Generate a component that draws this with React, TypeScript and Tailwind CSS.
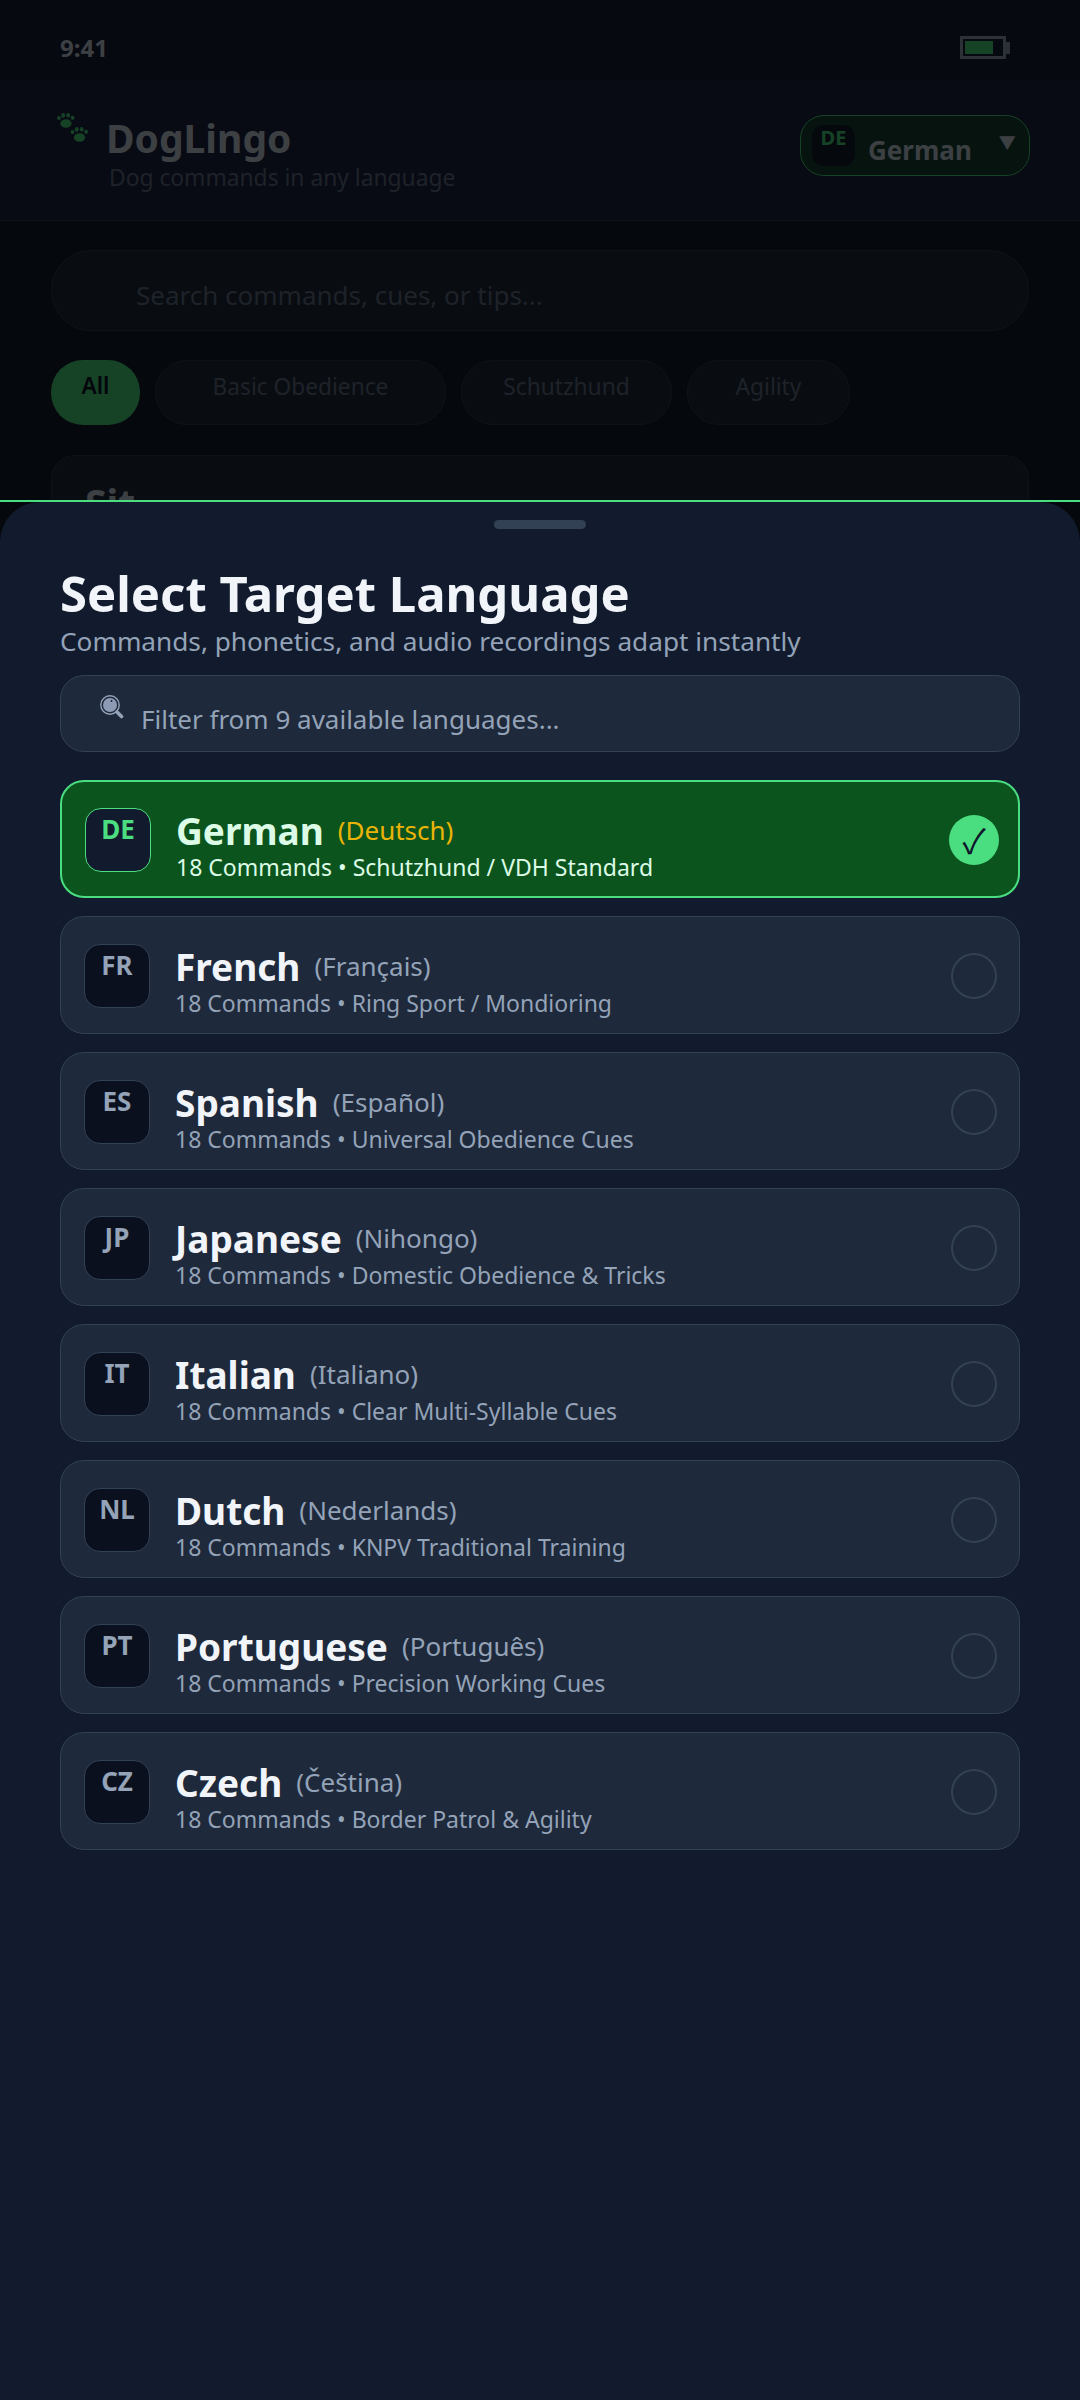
import React from 'react';

interface Language {
  code: string;
  name: string;
  native: string;
  detail: string;
}

const languages: Language[] = [
  { code: 'DE', name: 'German', native: '(Deutsch)', detail: '18 Commands • Schutzhund / VDH Standard' },
  { code: 'FR', name: 'French', native: '(Français)', detail: '18 Commands • Ring Sport / Mondioring' },
  { code: 'ES', name: 'Spanish', native: '(Español)', detail: '18 Commands • Universal Obedience Cues' },
  { code: 'JP', name: 'Japanese', native: '(Nihongo)', detail: '18 Commands • Domestic Obedience & Tricks' },
  { code: 'IT', name: 'Italian', native: '(Italiano)', detail: '18 Commands • Clear Multi-Syllable Cues' },
  { code: 'NL', name: 'Dutch', native: '(Nederlands)', detail: '18 Commands • KNPV Traditional Training' },
  { code: 'PT', name: 'Portuguese', native: '(Português)', detail: '18 Commands • Precision Working Cues' },
  { code: 'CZ', name: 'Czech', native: '(Čeština)', detail: '18 Commands • Border Patrol & Agility' },
];

function Paw({ x, y }: { x: number; y: number }) {
  return (
    <g transform={`translate(${x} ${y})`}>
      <ellipse cx="9" cy="10.5" rx="5.6" ry="4.3" />
      <ellipse cx="2" cy="5" rx="1.9" ry="2.1" />
      <ellipse cx="6.2" cy="2.4" rx="1.9" ry="2.3" />
      <ellipse cx="11.2" cy="2.2" rx="1.9" ry="2.2" />
      <ellipse cx="15.6" cy="4.8" rx="1.9" ry="2.1" />
    </g>
  );
}

function Chip({ label, width }: { label: string; width: string }) {
  return (
    <div
      className={`flex h-[65px] justify-center rounded-[32px] border border-[#334155] bg-[#1e293b] pt-[10px] text-[22.7px] leading-[32px] text-[#64748b] ${width}`}
    >
      {label}
    </div>
  );
}

function LanguageRow({ lang, selected }: { lang: Language; selected: boolean }) {
  return (
    <div
      className={`flex h-[118px] items-center rounded-[24px] pl-[23px] pr-[22px] ${
        selected ? 'border-2 border-[#4ade80] bg-[#0c541d]' : 'border border-[#334155] bg-[#1e293b]'
      }`}
    >
      <div
        className={`mt-[2px] flex h-[64px] w-[66px] shrink-0 justify-center rounded-[16px] border text-[26px] font-bold leading-[40px] ${
          selected ? 'border-[#4ade80] bg-[#121b2d] text-[#4ade80]' : 'border-[#334155] bg-[#0a101d] text-[#94a3b8]'
        }`}
      >
        {lang.code}
      </div>
      <div className="ml-[25px] flex-1 pt-[10px]">
        <div className="flex items-baseline gap-[14px]">
          <span
            className={`translate-y-[2px] text-[37px] font-bold leading-[46px] ${
              selected ? 'text-[#dcfce7]' : 'text-[#f1f5f9]'
            }`}
          >
            {lang.name}
          </span>
          <span className={`-translate-y-[3px] text-[26px] leading-[36px] ${selected ? 'text-[#eab308]' : 'text-[#94a3b8]'}`}>
            {lang.native}
          </span>
        </div>
        <div className={`text-[23px] leading-[30px] ${selected ? 'text-[#dcfce7]' : 'text-[#94a3b8]'}`}>
          {lang.detail}
        </div>
      </div>
      {selected ? (
        <div className="-ml-[1px] -mr-[3px] mt-[2px] flex h-[50px] w-[50px] items-center justify-center rounded-full bg-[#4ade80] font-['Noto_Sans_CJK_SC',sans-serif] text-[34px] leading-none text-[#0f172a]">
          ✓
        </div>
      ) : (
        <div className="mt-[2px] h-[46px] w-[46px] rounded-full border-2 border-[#334155]" />
      )}
    </div>
  );
}

export default function App() {
  return (
    <div className="relative h-[2400px] w-[1080px] overflow-hidden bg-[#121b2d] font-['Noto_Sans',sans-serif]">
      {/* Page behind the sheet */}
      <div className="flex h-[80px] items-start justify-between bg-[#141e36] pl-[60px] pr-[70px] pt-[30px]">
        <span className="text-[24px] font-bold leading-[36px] text-[#cbd5e1]">9:41</span>
        <div className="mt-[6px] flex items-center">
          <div className="h-[23px] w-[46px] border-[3px] border-[#94a3b8] p-[2px]">
            <div className="h-full w-[28px] bg-[#4ade80]" />
          </div>
          <div className="h-[12px] w-[4px] bg-[#94a3b8]" />
        </div>
      </div>
      <div className="flex h-[141px] items-start justify-between border-b border-[#334155] bg-[#1b2540] pl-[57px] pr-[50px] pt-[33px]">
        <div className="flex">
          <svg width="32" height="29" viewBox="0 0 32 29" fill="#4ade80" className="shrink-0">
            <Paw x={0} y={0} />
            <Paw x={13.5} y={14} />
          </svg>
          <div className="ml-[17px]">
            <div className="text-[39px] font-bold leading-[50px] text-[#cbd5e1]">DogLingo</div>
            <div className="ml-[3px] text-[22.8px] leading-[30px] text-[#64748b]">Dog commands in any language</div>
          </div>
        </div>
        <div className="mt-[2px] flex h-[61px] w-[230px] items-start rounded-[24px] border border-[#4ade80] bg-[#14532d]/60 pl-[11px] pt-[9px]">
          <div className="flex h-[41px] w-[43px] justify-center rounded-[12px] bg-[#111b2e] text-[20px] font-bold leading-[26px] text-[#4ade80]">
            DE
          </div>
          <span className="ml-[13px] mt-[5px] text-[26px] font-bold leading-[40px] text-[#cbd5e1]">German</span>
          <span className="ml-[27px] mt-[2px] font-['Noto_Sans_CJK_SC',sans-serif] text-[17px] leading-[30px] text-[#cbd5e1]">▼</span>
        </div>
      </div>
      <div className="px-[51px] pt-[29px]">
        <div className="flex h-[81px] items-center rounded-[40px] border border-[#334155] bg-[#1e293b] pl-[84px] pt-[10px] text-[26px] text-[#64748b]">
          Search commands, cues, or tips...
        </div>
        <div className="mt-[29px] flex gap-[15px]">
          <div className="flex h-[65px] w-[89px] justify-center rounded-[32px] bg-[#4ade80] pt-[10px] text-[22.7px] font-semibold leading-[32px] text-[#0f172a]">
            All
          </div>
          <Chip label="Basic Obedience" width="w-[291px]" />
          <Chip label="Schutzhund" width="w-[211px]" />
          <Chip label="Agility" width="w-[163px]" />
        </div>
        <div className="mt-[30px] h-[200px] rounded-[24px] border border-[#334155] bg-[#1e293b] pl-[33px] pt-[22px] text-[39px] font-bold leading-[50px] text-[#cbd5e1]">
          Sit
        </div>
      </div>

      {/* Dim overlay */}
      <div className="absolute inset-0 bg-black/70" />

      {/* Language sheet */}
      <div className="absolute inset-x-0 bottom-0 top-[500px]">
        <div className="h-[2px] bg-[#4ade80]" />
        <div className="h-[1898px] rounded-t-[40px] bg-[#121b2d] px-[60px] pt-[18px]">
          <div className="mx-auto h-[9px] w-[92px] rounded-full bg-[#334155]" />
          <h1 className="mt-[32px] text-[49px] font-bold leading-[64px] text-[#f1f5f9]">Select Target Language</h1>
          <p className="-mt-[2px] text-[26.2px] leading-[36px] text-[#94a3b8]">
            Commands, phonetics, and audio recordings adapt instantly
          </p>
          <div className="relative mt-[16px] flex h-[77px] items-center rounded-[24px] border border-[#334155] bg-[#1e293b] pl-[80px] pt-[12px] text-[26px] text-[#94a3b8]">
            <svg width="24" height="24" viewBox="0 0 24 24" className="absolute left-[39px] top-[19px]">
              <circle cx="10" cy="10" r="9.2" fill="none" stroke="#94a3b8" strokeWidth="1.4" />
              <circle cx="10" cy="10" r="7" fill="#8d9ab3" />
              <circle cx="11.5" cy="6" r="1" fill="#1e293b" />
              <line x1="17" y1="17" x2="21.5" y2="21.5" stroke="#94a3b8" strokeWidth="3.6" strokeLinecap="round" />
            </svg>
            Filter from 9 available languages...
          </div>
          <div className="mt-[28px] flex flex-col gap-[18px]">
            {languages.map((lang, index) => (
              <LanguageRow key={lang.code} lang={lang} selected={index === 0} />
            ))}
          </div>
        </div>
      </div>
    </div>
  );
}
